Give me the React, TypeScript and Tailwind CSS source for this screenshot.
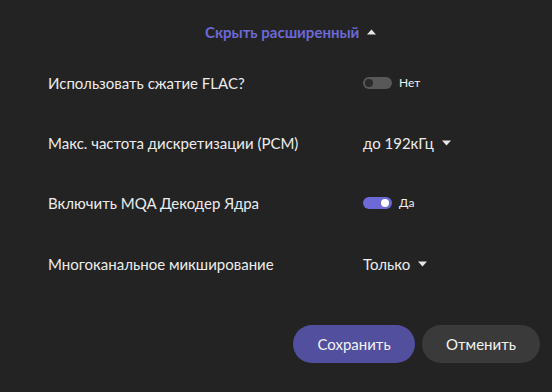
import React from "react";

const Caret = ({ up = false }: { up?: boolean }) => (
  <svg width="9" height="6" viewBox="0 0 9 6" className="ml-[8px]">
    {up ? <polygon points="0,5.5 9,5.5 4.5,0.5" fill="#e6e6e6" /> : <polygon points="0,0.5 9,0.5 4.5,5.5" fill="#e6e6e6" />}
  </svg>
);

const Toggle = ({ on }: { on: boolean }) => (
  <div className="flex items-center">
    <div className={`relative h-[12px] w-[29px] rounded-full ${on ? "bg-[#6d69d6]" : "bg-[#585858]"}`}>
      <div
        className={`absolute top-[2px] h-[8px] w-[8px] rounded-full ${on ? "right-[3px] bg-white" : "left-[2px] bg-[#2a2a2a]"}`}
      />
    </div>
    <span className="ml-[7px] text-[12px] text-[#f0f0f0]">{on ? "Да" : "Нет"}</span>
  </div>
);

const Row = ({ label, children }: { label: string; children: React.ReactNode }) => (
  <div className="flex h-[60px] items-center">
    <div className="w-[315px] text-[15px] text-[#ececec]">{label}</div>
    <div className="flex items-center">{children}</div>
  </div>
);

export default function App() {
  return (
    <div
      className="flex h-[392px] w-[552px] flex-col bg-[#232323] pl-[48px]"
      style={{ fontFamily: "Lato, 'Noto Sans', sans-serif" }}
    >
      <div className="mt-[22px] flex h-[20px] items-center pl-[157px]">
        <span className="text-[15px] font-bold text-[#6d69d6]">Скрыть расширенный</span>
        <Caret up />
      </div>
      <div className="mt-[11px] flex flex-col">
        <Row label="Использовать сжатие FLAC?">
          <Toggle on={false} />
        </Row>
        <Row label="Макс. частота дискретизации (PCM)">
          <span className="text-[15px] text-[#ececec]">до 192кГц</span>
          <Caret />
        </Row>
        <Row label="Включить MQA Декодер Ядра">
          <Toggle on={true} />
        </Row>
        <div className="flex h-[62px] items-center">
          <div className="w-[315px] text-[15px] text-[#ececec]">Многоканальное микширование</div>
          <div className="flex items-center">
            <span className="text-[15px] text-[#ececec]">Только</span>
            <Caret />
          </div>
        </div>
      </div>
      <div className="mt-[30px] flex justify-end gap-[7px] pr-[12px]">
        <button className="h-[38px] w-[122px] rounded-full bg-[#524f9f] text-[15px] text-[#f2f2f2]">Сохранить</button>
        <button className="h-[38px] w-[118px] rounded-full bg-[#3a3a3a] text-[15px] text-[#f2f2f2]">Отменить</button>
      </div>
    </div>
  );
}
